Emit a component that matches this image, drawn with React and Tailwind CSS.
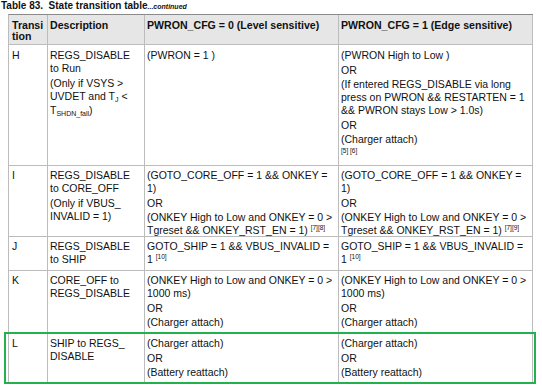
import React from "react";

const Sup = ({ children }) => (
  <span className="relative -top-[4px] text-[6.5px] leading-none">{children}</span>
);

const Cell = ({ children, className = "" }) => (
  <div className={`border-r border-b border-[#bcbcbc] pl-[2px] pr-[1px] ${className}`}>{children}</div>
);

const P = ({ children, first }) => (
  <div className={`whitespace-nowrap leading-[13px] ${first ? "" : "mt-[1.5px]"}`}>{children}</div>
);

const H = "bg-[#e6e6e6] pt-[5px] font-bold text-[10.6px] leading-[11px] whitespace-nowrap";

export default function App() {
  return (
    <div className="relative w-[542px] h-[388px] bg-white overflow-hidden font-['Liberation_Sans',Arial,sans-serif] text-[#111]">
      <div className="h-[14px] pl-[1px] text-[10px] font-bold leading-[12px] whitespace-nowrap">
        Table 83.&nbsp; State transition table<span className="italic text-[7px]">...continued</span>
      </div>
      <div className="ml-[8px] w-[525px] grid grid-cols-[39px_97px_194px_194px] grid-rows-[30px_121px_71px_34px_62px_51px] border-l border-t border-l-[#bcbcbc] border-t-[#8a8a8a] text-[10.5px]">
        {/* header */}
        <Cell className={`${H} pl-[3px]`}>
          <div>Transi</div>
          <div>tion</div>
        </Cell>
        <Cell className={H}>Description</Cell>
        <Cell className={H}>PWRON_CFG = 0 (Level sensitive)</Cell>
        <Cell className={H}>PWRON_CFG = 1 (Edge sensitive)</Cell>

        {/* H */}
        <Cell className="pt-[4px] pl-[3px]"><P first>H</P></Cell>
        <Cell className="pt-[4px]">
          <P first>REGS_DISABLE<br />to Run</P>
          <P>
            (Only if VSYS &gt;<br />
            UVDET and T<span className="text-[7px] relative top-[2px]">J</span> &lt;<br />
            T<span className="text-[7px] relative top-[2px]">SHDN_fall</span>)
          </P>
        </Cell>
        <Cell className="pt-[4px]"><P first>(PWRON = 1 )</P></Cell>
        <Cell className="pt-[4px]">
          <P first>(PWRON High to Low )</P>
          <P>OR</P>
          <P>(If entered REGS_DISABLE via long<br />press on PWRON &amp;&amp; RESTARTEN = 1<br />&amp;&amp; PWRON stays Low &gt; 1.0s)</P>
          <P>OR</P>
          <P>(Charger attach)</P>
          <div className="text-[6.5px] leading-[8px] mt-[1px]">[5] [6]</div>
        </Cell>

        {/* I */}
        <Cell className="pt-[3px] pl-[3px]"><P first>I</P></Cell>
        <Cell className="pt-[3px]">
          <P first>REGS_DISABLE<br />to CORE_OFF</P>
          <P>(Only if VBUS_<br />INVALID = 1)</P>
        </Cell>
        <Cell className="pt-[3px]">
          <P first>(GOTO_CORE_OFF = 1 &amp;&amp; ONKEY =<br />1)</P>
          <P>OR</P>
          <P>(ONKEY High to Low and ONKEY = 0 &gt;<br />Tgreset &amp;&amp; ONKEY_RST_EN = 1) <Sup>[7][8]</Sup></P>
        </Cell>
        <Cell className="pt-[3px]">
          <P first>(GOTO_CORE_OFF = 1 &amp;&amp; ONKEY =<br />1)</P>
          <P>OR</P>
          <P>(ONKEY High to Low and ONKEY = 0 &gt;<br />Tgreset &amp;&amp; ONKEY_RST_EN = 1) <Sup>[7][9]</Sup></P>
        </Cell>

        {/* J */}
        <Cell className="pt-[3px] pl-[3px]"><P first>J</P></Cell>
        <Cell className="pt-[3px]"><P first>REGS_DISABLE<br />to SHIP</P></Cell>
        <Cell className="pt-[3px]"><P first>GOTO_SHIP = 1 &amp;&amp; VBUS_INVALID =<br />1 <Sup>[10]</Sup></P></Cell>
        <Cell className="pt-[3px]"><P first>GOTO_SHIP = 1 &amp;&amp; VBUS_INVALID =<br />1 <Sup>[10]</Sup></P></Cell>

        {/* K */}
        <Cell className="pt-[3px] pl-[3px]"><P first>K</P></Cell>
        <Cell className="pt-[3px]"><P first>CORE_OFF to<br />REGS_DISABLE</P></Cell>
        <Cell className="pt-[3px]">
          <P first>(ONKEY High to Low and ONKEY = 0 &gt;<br />1000 ms)</P>
          <P>OR</P>
          <P>(Charger attach)</P>
        </Cell>
        <Cell className="pt-[3px]">
          <P first>(ONKEY High to Low and ONKEY = 0 &gt;<br />1000 ms)</P>
          <P>OR</P>
          <P>(Charger attach)</P>
        </Cell>

        {/* L */}
        <Cell className="pt-[4px] pl-[3px]"><P first>L</P></Cell>
        <Cell className="pt-[4px]"><P first>SHIP to REGS_<br />DISABLE</P></Cell>
        <Cell className="pt-[4px]">
          <P first>(Charger attach)</P>
          <P>OR</P>
          <P>(Battery reattach)</P>
        </Cell>
        <Cell className="pt-[4px]">
          <P first>(Charger attach)</P>
          <P>OR</P>
          <P>(Battery reattach)</P>
        </Cell>
      </div>
      <div className="absolute left-[4px] top-[332px] w-[532px] h-[52px] border-2 border-[#22b14c] pointer-events-none" />
    </div>
  );
}
